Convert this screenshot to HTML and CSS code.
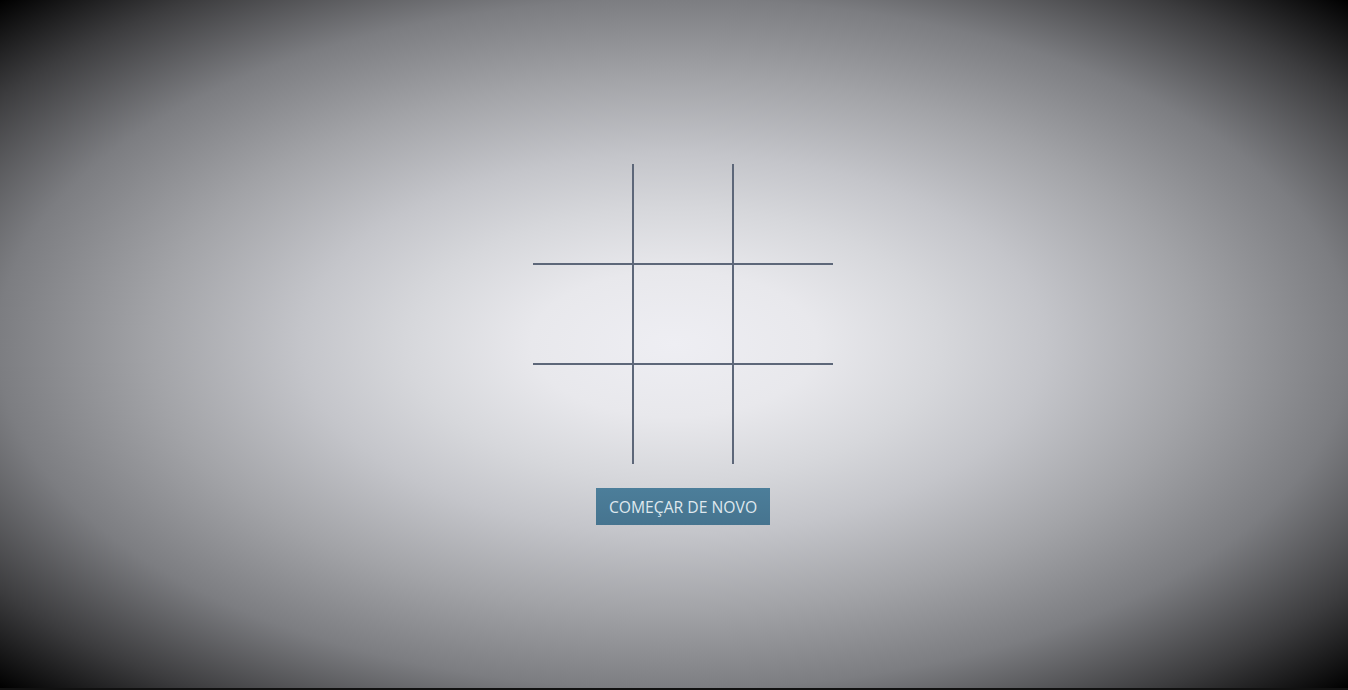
FILE: index.html
```html
<!DOCTYPE html>
<html lang="pt">
<head>
<meta charset="utf-8">
<title>Jogo da Velha</title>
<link rel="stylesheet" href="styles.css">
</head>
<body>
<main class="game">
  <div class="board">
    <div class="cell"></div>
    <div class="cell col2"></div>
    <div class="cell col3"></div>
    <div class="cell row2"></div>
    <div class="cell row2 col2"></div>
    <div class="cell row2 col3"></div>
    <div class="cell row3"></div>
    <div class="cell row3 col2"></div>
    <div class="cell row3 col3"></div>
  </div>
  <button class="restart">COMEÇAR DE NOVO</button>
</main>
</body>
</html>
```
FILE: styles.css
```css
html {
  margin: 0;
  background: #111;
}
body {
  margin: 0;
  height: 688px;
  overflow: hidden;
  background: radial-gradient(ellipse at center,
    #eeeef3 0%,
    #e8e8ec 15%,
    #d6d7db 28%,
    #c4c5ca 39%,
    #a2a3a7 55%,
    #7c7d81 71%,
    #3c3c3e 87%,
    #000 100%);
  font-family: "Open Sans", "Noto Sans", sans-serif;
}
.game {
  display: flex;
  flex-direction: column;
  align-items: center;
  padding-top: 164px;
  padding-left: 18px;
  gap: 24px;
}
.board {
  display: grid;
  grid-template-columns: 99px 100px 101px;
  grid-template-rows: 99px 100px 101px;
  width: 300px;
  height: 300px;
}
.cell {
  box-sizing: border-box;
}
.col2, .col3 {
  border-left: 2px solid #5d6779;
}
.row2, .row3 {
  border-top: 2px solid #5d6779;
}
.restart {
  width: 174px;
  height: 37px;
  padding: 0;
  border: none;
  background: linear-gradient(#4c7e9a, #46748f);
  color: #dfe8ee;
  font-family: "Open Sans", "Noto Sans", sans-serif;
  font-size: 15.7px;
  cursor: pointer;
}
```
